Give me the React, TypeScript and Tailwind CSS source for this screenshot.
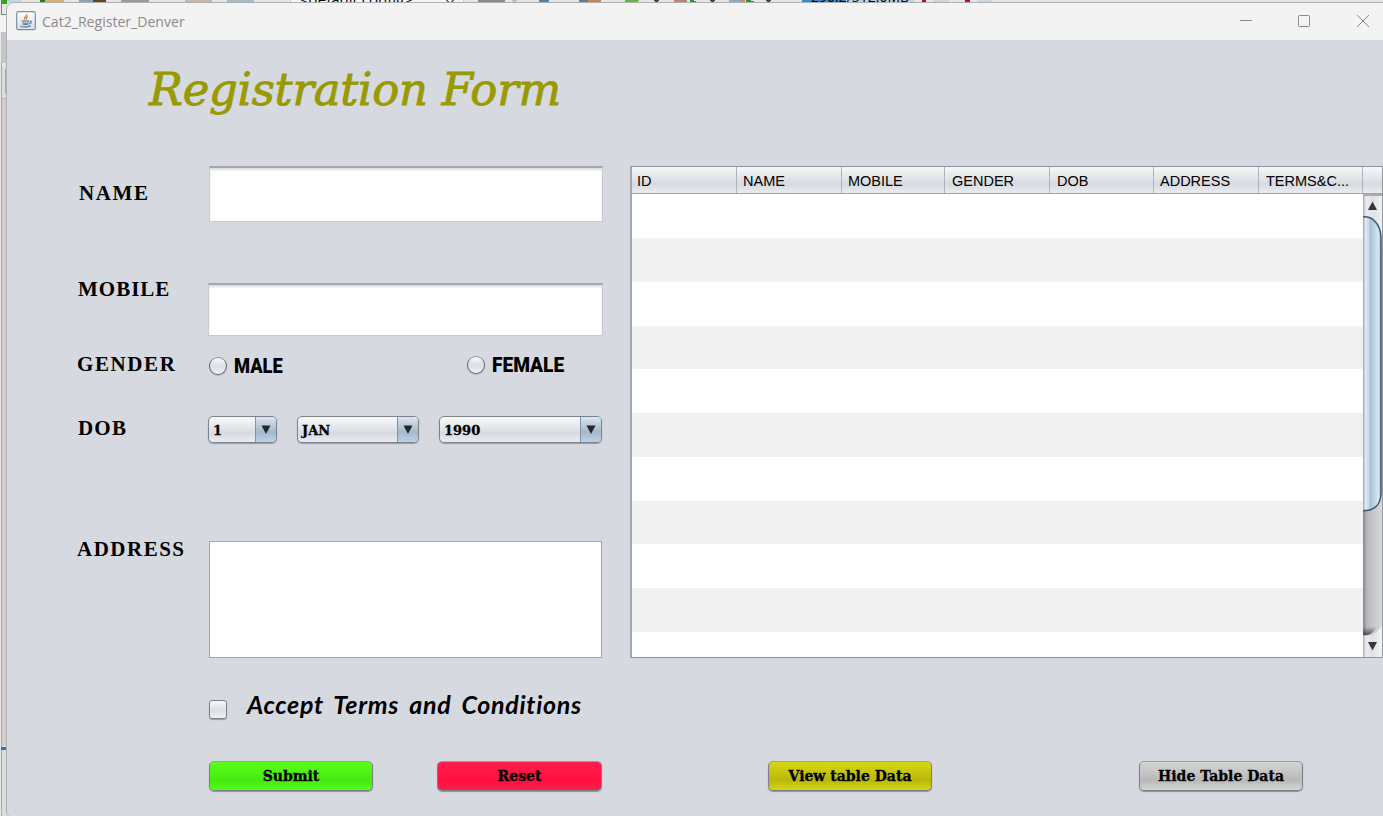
import React from "react";

const serif = "font-['DejaVu_Serif',serif]";

function Backdrop() {
  return (
    <div className="absolute inset-0 bg-[#e7e7e7]">
      <svg className="absolute left-0 top-0" width="1383" height="816" shapeRendering="crispEdges">
        <rect x="0" y="0" width="1383" height="3" fill="#e6e6e6" />
        <rect x="0" y="15" width="7" height="17" fill="#f3f3f3" />
        <rect x="1" y="32" width="6" height="31" fill="#c6c6c6" />
        <rect x="1" y="63" width="1" height="753" fill="#a9a9a9" />
        <rect x="2" y="66" width="5" height="32" fill="#dddddd" />
        <rect x="5" y="69" width="2" height="24" fill="#ababab" />
        <rect x="2" y="98" width="5" height="648" fill="#d0d0c8" />
        <rect x="2" y="98" width="5" height="1" fill="#b5b5b5" />
        <rect x="1" y="747" width="6" height="3" fill="#3273b5" />
        <rect x="2" y="750" width="5" height="66" fill="#dcdcdc" />
        <path d="M1.500 0V14.500H7" stroke="#76808f" fill="none" />
        <rect x="2" y="0" width="20" height="3" fill="#c2d5e2" />
        <rect x="2" y="0" width="5" height="4" fill="#35a21c" />
        <rect x="40" y="0" width="5" height="3" fill="#258313" />
        <rect x="45" y="0" width="19" height="3" fill="#dfad67" />
        <rect x="79" y="0" width="14" height="3" fill="#8ca2b6" />
        <rect x="93" y="0" width="13" height="2" fill="#664522" />
        <rect x="121" y="0" width="28" height="3" fill="#999b9e" />
        <rect x="185" y="0" width="27" height="3" fill="#c9b8a7" />
        <rect x="227" y="0" width="27" height="3" fill="#aabbc8" />
        <rect x="290" y="-2" width="173" height="5" fill="#f5f5f5" stroke="#cccccc" />
        <path d="M445 -1l5 4 5-4" stroke="#666" fill="none" />
        <rect x="478" y="0" width="27" height="3" fill="#8b8b8b" />
        <path d="M511 0h6l-3 3z" fill="#bcbcbc" />
        <path d="M540 3v-2h8v2" stroke="#5684a5" fill="none" strokeWidth="2" />
        <path d="M580 3v-2h8v2" stroke="#5684a5" fill="none" strokeWidth="2" />
        <rect x="588" y="0" width="13" height="3" fill="#c18953" />
        <path d="M625 0h14l-3 3h-11z" fill="#62b93c" />
        <path d="M653 0h6l-3 3zM709 0h6l-3 3zM765 0h6l-3 3z" fill="#444" />
        <rect x="674" y="0" width="13" height="3" fill="#c0817b" />
        <path d="M691 0v3m0-3l6 3" stroke="#24962b" strokeWidth="2" />
        <rect x="729" y="0" width="12" height="3" fill="#8ca9c2" />
        <rect x="741" y="0" width="4" height="3" fill="#df8149" />
        <path d="M747 0v3m0-3l8 3" stroke="#24962b" strokeWidth="2" />
        <rect x="802" y="0" width="112" height="3" fill="#b9d2e8" />
        <rect x="802" y="0" width="44" height="3" fill="#328bdb" />
        <rect x="922" y="0" width="4" height="3" fill="#b40d2c" />
        <rect x="933" y="0" width="16" height="3" fill="#cbd6e1" />
        <path d="M939 3v-1h9v1" stroke="#b33853" fill="none" />
        <rect x="965" y="0" width="5" height="3" fill="#b40d2c" />
        <rect x="977" y="0" width="15" height="3" fill="#cbd6e1" />
        <path d="M982 3v-1h9v1" stroke="#b33853" fill="none" />
      </svg>
      <span className="absolute left-[300px] top-[-10px] whitespace-nowrap font-['Open_Sans',sans-serif] text-[15px] leading-[18px] text-black">
        &lt;default config&gt;
      </span>
      <span className="absolute left-[811px] top-[-12px] whitespace-nowrap font-['Open_Sans',sans-serif] text-[14px] leading-[18px] text-black">
        290.2/512.0MB
      </span>
    </div>
  );
}

function JavaIcon() {
  return (
    <svg width="20" height="20" viewBox="0 0 20 20" fill="none">
      <defs>
        <linearGradient id="jv" x1="0" y1="0" x2="0" y2="1">
          <stop offset="0" stopColor="#fdfdfd" />
          <stop offset="1" stopColor="#d6dee5" />
        </linearGradient>
      </defs>
      <rect x="0.700" y="0.700" width="18.600" height="18" rx="1.800" fill="url(#jv)" stroke="#7891a5" strokeWidth="1.200" />
      <path d="M10.700 3.200c.8 2-3.600 3-2 5.400M12 5.600c-2.500 1-2.200 1.700-1.200 3" stroke="#e58a4d" strokeWidth="1.500" />
      <path d="M5.500 10.200h7.500M6.200 11.800c2 .8 4.600.8 6.600 0M6.800 13.200c2 .6 3.800.6 5.600 0M4.200 15c3 1.100 8 .9 10.600-.4M13.500 10.200c2.700-.6 2.200 2-.3 2.500" stroke="#5c7f9c" strokeWidth="1.200" />
    </svg>
  );
}

function TitleBar() {
  return (
    <header className="flex h-[37px] shrink-0 items-center bg-[#f3f3f3] pl-[9px]">
      <span className="-mt-[2px]">
        <JavaIcon />
      </span>
      <span className="ml-[6px] w-[160px] origin-left scale-x-[1.005] whitespace-nowrap font-['Open_Sans',sans-serif] text-[14px] leading-5 text-[#8b8b8b]">
        Cat2_Register_Denver
      </span>
      <svg className="ml-auto" width="143" height="37" fill="none" stroke="#8a8a8a">
        <path d="M0 17.500h12" />
        <rect x="58.500" y="12.500" width="11" height="11" rx="1" />
        <path d="M117 12l12 12M129 12l-12 12" />
      </svg>
    </header>
  );
}

function Label({ children, className = "" }: { children: React.ReactNode; className?: string }) {
  return (
    <span className={`w-[132px] shrink-0 whitespace-nowrap font-['Liberation_Serif',serif] text-[21px] font-bold leading-[14px] text-black ${className}`}>
      {children}
    </span>
  );
}

function Radio() {
  return (
    <span className="size-[18px] shrink-0 rounded-full border border-[#666a73] border-t-[#8d9099] bg-linear-to-b from-[#fafafb] via-[#dcdee3] to-[#f0f1f4] shadow-[0_1px_1px_#b2b5bd]" />
  );
}

function Combo({ value, className }: { value: string; className: string }) {
  return (
    <div className={`mt-px flex h-[27px] shrink-0 overflow-hidden rounded-[5px] border border-[#7d828c] bg-linear-to-b from-[#fafafb] via-[#d8dae0] via-65% to-[#e9ecf3] shadow-[0_1px_1px_#989ba5] ${className}`}>
      <span className={`flex-1 whitespace-nowrap pl-[4px] text-[13px] font-bold leading-[27px] text-black [-webkit-text-stroke:0.300px_#000] ${serif}`}>{value}</span>
      <span className="flex w-[21px] shrink-0 justify-center border-l border-[#7d96ab] bg-linear-to-b from-[#dce6ee] via-[#a3b8cb] via-60% to-[#bcd1e2] pt-[8px]">
        <svg width="10" height="9">
          <path d="M0.500 0.500h9L5 9z" fill="#222629" />
        </svg>
      </span>
    </div>
  );
}

function PushButton({ children, className }: { children: string; className: string }) {
  return (
    <button className={`h-[30px] shrink-0 whitespace-nowrap rounded-[5px] border border-[#7d8085] border-t-[#9a9da2] bg-linear-to-b text-[14px] font-bold leading-[27px] text-black shadow-[0_1px_1px_#8d9098] [-webkit-text-stroke:0.300px_#000] ${serif} ${className}`}>
      {children}
    </button>
  );
}

const columns = [
  { name: "ID", width: "w-[105px] pl-[5px]" },
  { name: "NAME", width: "w-[105px] pl-[6px]" },
  { name: "MOBILE", width: "w-[103px] pl-[6px]" },
  { name: "GENDER", width: "w-[105px] pl-[7px]" },
  { name: "DOB", width: "w-[104px] pl-[7px]" },
  { name: "ADDRESS", width: "w-[105px] pl-[6px]" },
  { name: "TERMS&C...", width: "w-[104px] pl-[7px]" },
];

const rowHeights = ["h-[44px]", "h-[44px]", "h-[44px]", "h-[43px]", "h-[44px]", "h-[44px]", "h-[44px]", "h-[43px]", "h-[44px]", "h-[44px]", "h-[25px]"];

function Scrollbar() {
  return (
    <svg width="20" height="463" viewBox="0 0 20 463" className="shrink-0">
      <defs>
        <linearGradient id="track">
          <stop offset="0" stopColor="#83858b" />
          <stop offset="0.200" stopColor="#b7b9be" />
          <stop offset="0.600" stopColor="#c9cbd0" />
          <stop offset="1" stopColor="#d7d9de" />
        </linearGradient>
        <linearGradient id="cap">
          <stop offset="0" stopColor="#a9abb0" />
          <stop offset="0.150" stopColor="#ececef" />
          <stop offset="0.500" stopColor="#dfe0e4" />
          <stop offset="1" stopColor="#f3f4f6" />
        </linearGradient>
        <linearGradient id="thumb">
          <stop offset="0" stopColor="#7fa0bd" />
          <stop offset="0.120" stopColor="#e1ebf2" />
          <stop offset="0.300" stopColor="#cbdbe7" />
          <stop offset="0.420" stopColor="#aac1d5" />
          <stop offset="0.850" stopColor="#d5e9f4" />
          <stop offset="1" stopColor="#9db4c5" />
        </linearGradient>
        <linearGradient id="dark" x1="0" y1="0" x2="0" y2="1">
          <stop offset="0" stopColor="#333" stopOpacity="0" />
          <stop offset="1" stopColor="#333" stopOpacity="0.800" />
        </linearGradient>
      </defs>
      <rect width="20" height="463" fill="url(#track)" />
      <rect width="20" height="50" fill="url(#cap)" />
      <rect width="20" height="2" fill="#aaacb1" />
      <path d="M5 16h9L9.500 7.500z" fill="#34373b" />
      <path d="M0 22.800c10-1 17.500 8 18 20v256c0 11-6 18-18 18z" fill="url(#thumb)" />
      <path d="M0 22.800c10-1 17.500 8 18 20v256c0 11-6 18-18 18" fill="none" stroke="#40596e" strokeWidth="1.500" />
      <path d="M0 433h14q-5 7-10 8H0z" fill="url(#dark)" />
      <path d="M0 441.500c10 1 14-3 19-10V463H0z" fill="url(#cap)" />
      <path d="M5 448h9l-4.500 8.500z" fill="#34373b" />
      <path d="M19.500 0v463" stroke="#9598a3" />
    </svg>
  );
}

function DataTable() {
  return (
    <section className="h-[492px] w-[753px] shrink-0 border border-r-0 border-[#9094a0] border-l-2 border-l-[#a3a7b1]">
      <div className="flex h-[27px] border-b border-[#9ca2ad] bg-linear-to-b from-[#f8f8f9] via-[#d7dae0] via-65% to-[#e9ecf1]">
        {columns.map((c) => (
          <div key={c.name} className={`shrink-0 whitespace-nowrap border-r border-[#b1b4bc] font-['Liberation_Sans',sans-serif] text-[14.500px] leading-[28px] text-black ${c.width}`}>
            {c.name}
          </div>
        ))}
        <div className="ml-auto w-px bg-[#9598a3]" />
      </div>
      <div className="flex h-[463px]">
        <div className="flex-1">
          {rowHeights.map((h, i) => (
            <div key={i} className={`${h} ${i % 2 ? "bg-[#f1f1f1]" : "bg-white"}`} />
          ))}
        </div>
        <Scrollbar />
      </div>
    </section>
  );
}

function Form() {
  return (
    <div className="w-[553px] shrink-0">
      <div className="flex h-[56px]">
        <Label className="pl-[2px] pt-[20px] tracking-[1.600px]">NAME</Label>
        <div className="h-[56px] w-[394px] border border-[#c8cacd] border-t-2 border-t-[#a5a7ab] bg-white shadow-[inset_0_2px_2px_#dedede]" />
      </div>
      <div className="mt-[61px] flex h-[53px]">
        <Label className="-mr-px -mt-px pl-px tracking-[1px]">MOBILE</Label>
        <div className="h-[53px] w-[395px] border border-[#c8cacd] border-t-2 border-t-[#a5a7ab] bg-white shadow-[inset_0_2px_2px_#dedede]" />
      </div>
      <div className="mt-[18px] flex h-[24px] items-center font-['Roboto',sans-serif] text-[21px] font-black leading-[24px] text-black">
        <Label className="-mt-[5px] tracking-[1.600px]">GENDER</Label>
        <Radio />
        <span className="ml-[7px] w-[233px] origin-left scale-x-[0.87]">MALE</span>
        <div className="-mt-[2px] flex items-center">
          <Radio />
          <span className="ml-[7px] origin-left scale-x-[0.910]">FEMALE</span>
        </div>
      </div>
      <div className="mt-[37px] flex h-[30px]">
        <Label className="-mr-px pl-px pt-[6px] tracking-[1.200px]">DOB</Label>
        <Combo value="1" className="w-[69px]" />
        <Combo value="JAN" className="ml-[20px] w-[122px]" />
        <Combo value="1990" className="ml-[20px] w-[163px]" />
      </div>
      <div className="mt-[96px] flex h-[117px]">
        <Label className="pt-px tracking-[1.500px]">ADDRESS</Label>
        <div className="h-[117px] w-[393px] border border-[#a3a7b3] bg-white" />
      </div>
    </div>
  );
}

export default function App() {
  return (
    <div className="relative h-[816px] w-[1383px] overflow-hidden">
      <Backdrop />
      <div className="absolute left-[6px] top-[2px] flex h-[817px] w-[1390px] flex-col overflow-hidden rounded-[8px] border border-[#aeb0b2] bg-[#d6d9e0]">
        <div className="w-[1376px]">
          <TitleBar />
          <main>
            <h1 className={`h-[126px] whitespace-nowrap pl-[142px] pt-[20px] text-[45px] italic leading-[60px] tracking-[-0.250px] text-[#999900] [-webkit-text-stroke:0.900px_#999900] ${serif}`}>
              Registration Form
            </h1>
            <div className="flex pl-[70px]">
              <Form />
              <DataTable />
            </div>
            <div className="mt-[28px] flex h-[44px] pl-[202px]">
              <span className="mt-[14px] h-[19px] w-[18px] rounded-[3px] border border-[#7e828a] bg-linear-to-b from-[#fafafb] via-[#dcdee3] to-[#f0f1f4] shadow-[0_1px_1px_#989ba5]" />
              <span className="ml-[20px] whitespace-nowrap font-['Lato',sans-serif] text-[25px] font-bold italic leading-[36px] tracking-[0.700px] text-black [font-variant-ligatures:none] [word-spacing:4px]">
                Accept Terms and Conditions
              </span>
            </div>
            <div className="mt-[31px] flex pl-[202px]">
              <PushButton className="w-[164px] from-[#5aff1c] via-[#44ea10] via-65% to-[#56ff1c]">Submit</PushButton>
              <PushButton className="ml-[64px] w-[165px] from-[#ff1f4c] via-[#ff1040] via-65% to-[#ff1f4c]">Reset</PushButton>
              <PushButton className="ml-[166px] w-[164px] from-[#d7d714] via-[#b9b70a] via-65% to-[#d7d714]">View table Data</PushButton>
              <PushButton className="ml-[207px] w-[164px] from-[#d6d6d6] via-[#b8b8b8] via-65% to-[#d6d6d6]">Hide Table Data</PushButton>
            </div>
          </main>
        </div>
      </div>
    </div>
  );
}
